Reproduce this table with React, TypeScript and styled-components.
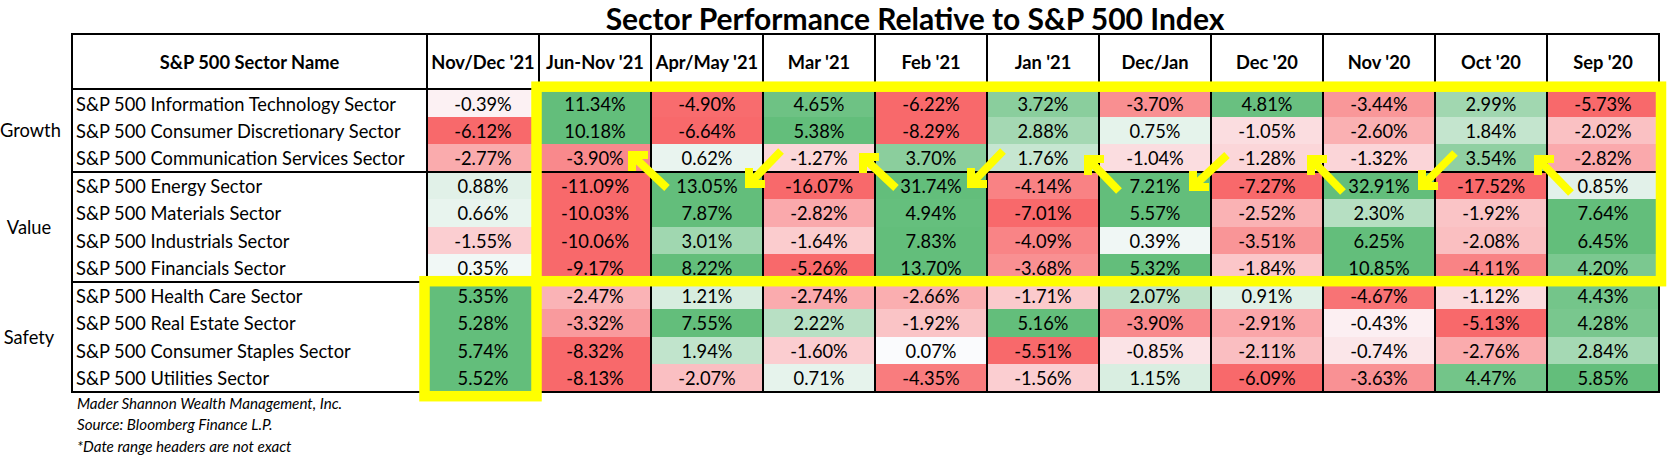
import React from "react";
import styled, { createGlobalStyle } from "styled-components";

const GlobalStyle = createGlobalStyle`
  html, body { margin: 0; padding: 0; background: #ffffff; }
  body { font-family: Lato, "Liberation Sans", sans-serif; color: #000000; }
`;

const COLUMNS = [
  "Nov/Dec '21",
  "Jun-Nov '21",
  "Apr/May '21",
  "Mar '21",
  "Feb '21",
  "Jan '21",
  "Dec/Jan",
  "Dec '20",
  "Nov '20",
  "Oct '20",
  "Sep '20",
];

type Row = { name: string; values: number[] };
type Group = { label: string; rows: Row[] };

const GROUPS: Group[] = [
  {
    label: "Growth",
    rows: [
      { name: "S&P 500 Information Technology Sector", values: [-0.39, 11.34, -4.9, 4.65, -6.22, 3.72, -3.7, 4.81, -3.44, 2.99, -5.73] },
      { name: "S&P 500 Consumer Discretionary Sector", values: [-6.12, 10.18, -6.64, 5.38, -8.29, 2.88, 0.75, -1.05, -2.6, 1.84, -2.02] },
      { name: "S&P 500 Communication Services Sector", values: [-2.77, -3.9, 0.62, -1.27, 3.7, 1.76, -1.04, -1.28, -1.32, 3.54, -2.82] },
    ],
  },
  {
    label: "Value",
    rows: [
      { name: "S&P 500 Energy Sector", values: [0.88, -11.09, 13.05, -16.07, 31.74, -4.14, 7.21, -7.27, 32.91, -17.52, 0.85] },
      { name: "S&P 500 Materials Sector", values: [0.66, -10.03, 7.87, -2.82, 4.94, -7.01, 5.57, -2.52, 2.3, -1.92, 7.64] },
      { name: "S&P 500 Industrials Sector", values: [-1.55, -10.06, 3.01, -1.64, 7.83, -4.09, 0.39, -3.51, 6.25, -2.08, 6.45] },
      { name: "S&P 500 Financials Sector", values: [0.35, -9.17, 8.22, -5.26, 13.7, -3.68, 5.32, -1.84, 10.85, -4.11, 4.2] },
    ],
  },
  {
    label: "Safety",
    rows: [
      { name: "S&P 500 Health Care Sector", values: [5.35, -2.47, 1.21, -2.74, -2.66, -1.71, 2.07, 0.91, -4.67, -1.12, 4.43] },
      { name: "S&P 500 Real Estate Sector", values: [5.28, -3.32, 7.55, 2.22, -1.92, 5.16, -3.9, -2.91, -0.43, -5.13, 4.28] },
      { name: "S&P 500 Consumer Staples Sector", values: [5.74, -8.32, 1.94, -1.6, 0.07, -5.51, -0.85, -2.11, -0.74, -2.76, 2.84] },
      { name: "S&P 500 Utilities Sector", values: [5.52, -8.13, -2.07, 0.71, -4.35, -1.56, 1.15, -6.09, -3.63, 4.47, 5.85] },
    ],
  },
];

const RED = [248, 105, 107];
const WHITE = [252, 252, 255];
const GREEN = [99, 190, 123];

function heat(v: number): string {
  const t = Math.min(Math.abs(v) / 5, 1);
  const target = v < 0 ? RED : GREEN;
  const c = WHITE.map((w, i) => Math.round(w + (target[i] - w) * t));
  return `rgb(${c[0]}, ${c[1]}, ${c[2]})`;
}

const fmt = (v: number) => `${v.toFixed(2)}%`;

/* ---------- layout ---------- */

const Page = styled.div`
  position: relative;
  width: 1670px;
  height: 460px;
  overflow: hidden;
  background: #ffffff;
`;

const Title = styled.h1`
  margin: 0;
  height: 33px;
  line-height: 36px;
  padding-left: 160px;
  text-align: center;
  font-size: 30px;
  font-weight: 700;
  white-space: nowrap;
  color: #000000;
`;

const Sheet = styled.table`
  border-collapse: collapse;
  table-layout: fixed;
  width: 1660px;
  font-size: 18.3px;
`;

const LabelCol = styled.col`
  width: 72px;
`;
const NameCol = styled.col`
  width: 355px;
`;
const DataCol = styled.col`
  width: 112px;
`;

const HeadRow = styled.tr`
  height: 55px;
`;

const BodyRow = styled.tr`
  height: 27.5px;
`;

const BlankHead = styled.th`
  border: none;
  padding: 0;
`;

const HeadCell = styled.th`
  border: 2px solid #000000;
  padding: 0;
  font-weight: 700;
  text-align: center;
  white-space: nowrap;
  vertical-align: middle;
`;

const GroupLabel = styled.td`
  border: none;
  padding: 0 13px 0 0;
  text-align: center;
  vertical-align: middle;
  white-space: nowrap;
`;

const NameCell = styled.td<{ $first: boolean; $last: boolean }>`
  border-left: 2px solid #000000;
  border-right: 2px solid #000000;
  border-top: ${(p) => (p.$first ? "2px solid #000000" : "none")};
  border-bottom: ${(p) => (p.$last ? "2px solid #000000" : "none")};
  padding: 1px 0 0 3px;
  text-align: left;
  white-space: nowrap;
  vertical-align: middle;
`;

const ValueCell = styled.td<{ $bg: string; $first: boolean; $last: boolean }>`
  background: ${(p) => p.$bg};
  border-left: 2px solid #000000;
  border-right: 2px solid #000000;
  border-top: ${(p) => (p.$first ? "2px solid #000000" : "none")};
  border-bottom: ${(p) => (p.$last ? "2px solid #000000" : "none")};
  padding: 1px 0 0 0;
  text-align: center;
  white-space: nowrap;
  vertical-align: middle;
`;

const Notes = styled.div`
  padding-left: 77px;
  font-style: italic;
  font-size: 15.2px;
  line-height: 21.5px;
  color: #000000;
`;

const NoteLine = styled.div`
  white-space: nowrap;
`;

const Overlay = styled.svg`
  position: absolute;
  left: 0;
  top: 0;
  width: 1670px;
  height: 460px;
  pointer-events: none;
`;

/* ---------- highlight drawing ---------- */

const YELLOW = "#FFFF00";

type Arrow = { tail: [number, number]; head: [number, number] };

const ARROWS: Arrow[] = [
  { tail: [667, 188], head: [629, 152] },
  { tail: [781, 151], head: [746, 187] },
  { tail: [896, 188], head: [860, 154] },
  { tail: [1003, 151], head: [968, 187] },
  { tail: [1119, 191], head: [1085, 156] },
  { tail: [1227, 155], head: [1190, 190] },
  { tail: [1343, 192], head: [1308, 156] },
  { tail: [1455, 153], head: [1419, 189] },
  { tail: [1571, 193], head: [1535, 156] },
];

const ArrowMark: React.FC<{ a: Arrow }> = ({ a }) => {
  const [tx, ty] = a.tail;
  const [hx, hy] = a.head;
  const sx = Math.sign(tx - hx);
  const sy = Math.sign(ty - hy);
  const vx = hx + sx * 3;
  const vy = hy + sy * 3;
  const L = 16;
  return (
    <g stroke={YELLOW} strokeWidth={8} fill="none">
      <line x1={tx} y1={ty} x2={vx + sx * 2} y2={vy + sy * 2} strokeLinecap="butt" />
      <polyline
        points={`${vx + sx * L},${vy} ${vx},${vy} ${vx},${vy + sy * L}`}
        strokeLinejoin="miter"
        strokeLinecap="butt"
      />
    </g>
  );
};

const Highlights: React.FC = () => (
  <Overlay viewBox="0 0 1670 460">
    <rect x={536.5} y={86.7} width={1124.5} height={194.5} fill="none" stroke={YELLOW} strokeWidth={10.5} />
    <rect x={424.5} y={281.2} width={112} height={115} fill="none" stroke={YELLOW} strokeWidth={10.5} />
    {ARROWS.map((a, i) => (
      <ArrowMark key={i} a={a} />
    ))}
  </Overlay>
);

/* ---------- app ---------- */

export default function App() {
  return (
    <Page>
      <GlobalStyle />
      <Title>Sector Performance Relative to S&amp;P 500 Index</Title>
      <Sheet>
        <colgroup>
          <LabelCol />
          <NameCol />
          {COLUMNS.map((c) => (
            <DataCol key={c} />
          ))}
        </colgroup>
        <thead>
          <HeadRow>
            <BlankHead />
            <HeadCell>S&amp;P 500 Sector Name</HeadCell>
            {COLUMNS.map((c) => (
              <HeadCell key={c}>{c}</HeadCell>
            ))}
          </HeadRow>
        </thead>
        {GROUPS.map((g, gi) => (
          <tbody key={g.label}>
            {g.rows.map((r, ri) => {
              const first = ri === 0;
              const last = gi === GROUPS.length - 1 && ri === g.rows.length - 1;
              return (
                <BodyRow key={r.name}>
                  {first && <GroupLabel rowSpan={g.rows.length}>{g.label}</GroupLabel>}
                  <NameCell $first={first} $last={last}>
                    {r.name}
                  </NameCell>
                  {r.values.map((v, vi) => (
                    <ValueCell key={vi} $bg={heat(v)} $first={first} $last={last}>
                      {fmt(v)}
                    </ValueCell>
                  ))}
                </BodyRow>
              );
            })}
          </tbody>
        ))}
      </Sheet>
      <Notes>
        <NoteLine>Mader Shannon Wealth Management, Inc.</NoteLine>
        <NoteLine>Source: Bloomberg Finance L.P.</NoteLine>
        <NoteLine>*Date range headers are not exact</NoteLine>
      </Notes>
      <Highlights />
    </Page>
  );
}
